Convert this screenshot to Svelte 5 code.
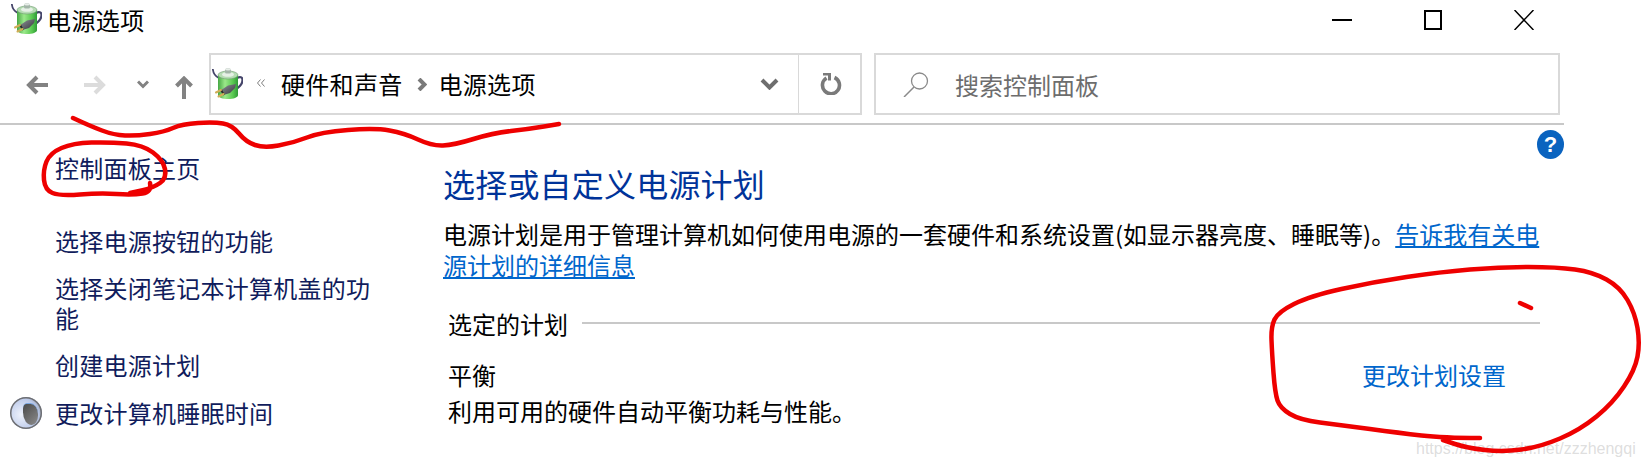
<script>
  const navLinks = [
    { label: "控制面板主页", home: true },
    { label: "选择电源按钮的功能" },
    { label: "选择关闭笔记本计算机盖的功能" },
    { label: "创建电源计划" },
    { label: "更改计算机睡眠时间", sleep: true },
  ];

  // hand-drawn red marks, points read off the screenshot
  const scribbles = [
    [[73,118],[90,126],[114,135],[136,136],[164,132],[182,124],[214,122],[232,125],[246,142],[264,148],[293,143],[321,132],[375,128],[404,133],[432,146],[454,145],[493,133],[529,129],[559,124]],
    [[150,183],[152,192],[133,195],[100,193],[60,196],[45,190],[43,170],[50,153],[73,143],[110,142],[143,145],[163,160],[167,178],[153,188],[130,193]],
    [[1480,438],[1443,438],[1400,433],[1340,425],[1300,420],[1280,408],[1275,393],[1272,353],[1271,327],[1278,312],[1310,296],[1373,282],[1440,272],[1500,267],[1557,267],[1593,272],[1620,287],[1635,313],[1640,343],[1635,370],[1613,403],[1580,430],[1540,447],[1503,452],[1467,448],[1443,440]],
    [[1520,303],[1531,308]],
  ];

  function smooth(pts) {
    let d = `M${pts[0][0]} ${pts[0][1]}`;
    for (let i = 1; i < pts.length - 1; i++) {
      const mx = (pts[i][0] + pts[i + 1][0]) / 2;
      const my = (pts[i][1] + pts[i + 1][1]) / 2;
      d += ` Q${pts[i][0]} ${pts[i][1]} ${mx} ${my}`;
    }
    const last = pts[pts.length - 1];
    return d + ` L${last[0]} ${last[1]}`;
  }
</script>

{#snippet powerIcon()}
  <svg class="power" viewBox="0 0 31 32" width="31" height="32" aria-hidden="true">
    <defs>
      <linearGradient id="cell" x1="0" x2="1" y1="0" y2="0">
        <stop offset="0" stop-color="#46a844" />
        <stop offset="0.35" stop-color="#9be88a" />
        <stop offset="0.75" stop-color="#58c850" />
        <stop offset="1" stop-color="#2f9a38" />
      </linearGradient>
      <linearGradient id="plug" x1="0" x2="1" y1="0" y2="1">
        <stop offset="0" stop-color="#8d9098" />
        <stop offset="1" stop-color="#34353a" />
      </linearGradient>
    </defs>
    <path d="M.8 1c.4 4 2 7 6 9" fill="none" stroke="#45456a" stroke-width="1.800" />
    <path d="M25 10c3-1.500 5.500-1 5.500 2 0 4-3 7-6.500 9" fill="none" stroke="#45456a" stroke-width="2.200" />
    <path d="M6 7v20c0 2.500 4.500 4 10 4s10-1.500 10-4V7z" fill="url(#cell)" />
    <ellipse cx="16" cy="7" rx="10" ry="4" fill="#b5dcb3" stroke="#6f9b70" stroke-width=".6" />
    <ellipse cx="16" cy="6.500" rx="6" ry="2.300" fill="#e6f0e6" />
    <rect x="13" y=".5" width="6" height="5" rx="1.500" fill="#a3b5a8" />
    <ellipse cx="16" cy="1.500" rx="3" ry="1.100" fill="#e8eee9" />
    <path d="M24 16l-8 1.500-6 4 3 5 5-1.500 5-5z" fill="url(#plug)" />
    <path d="M10 21.500l3 5-1.500 1L8 22.500z" fill="#2a2b30" />
    <path d="M9 22L4 24.500M11.500 26l-5 2.500" stroke="#d0ad57" stroke-width="2" stroke-linecap="round" />
  </svg>
{/snippet}

<div class="window">
  <header class="titlebar">
    {@render powerIcon()}
    <span class="title">电源选项</span>
    <div class="controls">
      <svg width="20" height="20" viewBox="0 0 20 20"><path d="M0 10h20" stroke="#000" stroke-width="2" /></svg>
      <svg width="18" height="20" viewBox="0 0 18 20"><rect x="1" y="1" width="16" height="18" fill="none" stroke="#000" stroke-width="2" /></svg>
      <svg width="20" height="20" viewBox="0 0 20 20"><path d="M.5 0l19 20M19.500 0L.5 20" stroke="#000" stroke-width="1.500" /></svg>
    </div>
  </header>

  <div class="toolbar">
    <div class="nav-btns">
      <svg class="back" width="22" height="20" viewBox="0 0 22 20"><path d="M11 2l-8 8 8 8M3 10h19" fill="none" stroke="#828282" stroke-width="4" /></svg>
      <svg class="forward" width="22" height="20" viewBox="0 0 22 20"><path d="M11 2l8 8-8 8M19 10H0" fill="none" stroke="#dcdcdc" stroke-width="4" /></svg>
      <svg class="recent" width="12" height="9" viewBox="0 0 12 9"><path d="M1 1.500l5 5 5-5" fill="none" stroke="#828282" stroke-width="3" /></svg>
      <svg class="up" width="18" height="23" viewBox="0 0 18 23"><path d="M1.500 10L9 2.500 16.500 10M9 3v20" fill="none" stroke="#828282" stroke-width="4" /></svg>
    </div>

    <div class="address">
      {@render powerIcon()}
      <svg class="more" width="8" height="8" viewBox="0 0 8 8"><path d="M3.500 .5L.5 4l3 3.500M7.500 .5L4.500 4l3 3.500" fill="none" stroke="#7d7d7d" /></svg>
      <span class="crumb first">硬件和声音</span>
      <svg class="sep" width="10" height="13" viewBox="0 0 10 13"><path d="M2 1l5.500 5.500L2 12" fill="none" stroke="#7a7a7a" stroke-width="4" /></svg>
      <span class="crumb">电源选项</span>
      <svg class="drop" width="19" height="12" viewBox="0 0 19 12"><path d="M2 2l7.500 7.500L17 2" fill="none" stroke="#6e6e6e" stroke-width="4" /></svg>
      <div class="refresh">
        <svg width="22" height="22" viewBox="0 0 22 22"><path d="M6.500 5a8.500 8.500 0 1 0 8 -.5" fill="none" stroke="#7a7a7a" stroke-width="3.600" /><path d="M3 1h6.500v6.500" fill="none" stroke="#7a7a7a" stroke-width="3" /></svg>
      </div>
    </div>

    <div class="search">
      <svg width="26" height="25" viewBox="0 0 26 25"><circle cx="16.500" cy="9" r="8" fill="none" stroke="#8a8a8a" stroke-width="1.300" /><path d="M11 15L1 25" stroke="#8a8a8a" stroke-width="1.500" /></svg>
      <span>搜索控制面板</span>
    </div>
  </div>

  <div class="body">
    <nav class="side">
      {#each navLinks as link}
        <div class="side-link" class:home={link.home}>
          {#if link.sleep}
            <span class="moon"><span class="moon-shade"></span></span>
          {/if}
          <span>{link.label}</span>
        </div>
      {/each}
    </nav>

    <main class="content">
      <span class="help">?</span>
      <h1>选择或自定义电源计划</h1>
      <p class="desc">
        电源计划是用于管理计算机如何使用电源的一套硬件和系统设置(如显示器亮度、睡眠等)。<a href="#help">告诉我有关电源计划的详细信息</a>
      </p>
      <div class="section">
        <span>选定的计划</span>
        <div class="rule"></div>
      </div>
      <div class="plan">
        <div>
          <div>平衡</div>
          <div>利用可用的硬件自动平衡功耗与性能。</div>
        </div>
        <a class="change" href="#change">更改计划设置</a>
      </div>
    </main>
  </div>

  <span class="watermark">https://blog.csdn.net/zzzhengqi</span>

  <svg class="ink" width="1642" height="467" viewBox="0 0 1642 467" aria-hidden="true">
    {#each scribbles as pts}
      <path d={smooth(pts)} />
    {/each}
  </svg>
</div>

<style>
  :global(body) {
    margin: 0;
    background: #fff;
  }

  .window {
    position: relative;
    width: 1642px;
    height: 467px;
    overflow: hidden;
    background: #fff;
    color: #000;
    font-family: "Noto Sans CJK SC", "Liberation Sans", sans-serif;
    font-size: 24px;
  }

  .titlebar {
    height: 40px;
    display: flex;
    align-items: center;
    padding-left: 11px;
    box-sizing: border-box;
  }

  .titlebar .power {
    margin-top: -2px;
  }

  .title {
    margin-left: 5px;
    line-height: 40px;
    letter-spacing: 0.4px;
  }

  .controls {
    margin-left: auto;
    margin-right: 108px;
    display: flex;
    align-items: center;
    gap: 72px;
    margin-top: -1px;
  }

  .controls svg {
    display: block;
  }

  .toolbar {
    width: 1564px;
    height: 85px;
    padding-top: 13px;
    box-sizing: border-box;
    border-bottom: 2px solid #c8c8c8;
    display: flex;
    align-items: flex-start;
  }

  .nav-btns {
    width: 209px;
    height: 62px;
    padding-left: 26px;
    box-sizing: border-box;
    display: flex;
    align-items: center;
  }

  .nav-btns svg {
    flex: none;
  }

  .back { margin-top: 2px; }
  .forward { margin-left: 36px; margin-top: 2px; }
  .recent { margin-left: 31px; }
  .up { margin-left: 26px; margin-top: 6px; }

  .address {
    width: 653px;
    height: 62px;
    box-sizing: border-box;
    border: 2px solid #d9d9d9;
    display: flex;
    align-items: center;
    padding-left: 1px;
  }

  .address .power { flex: none; }

  .more {
    margin-left: 14px;
    margin-top: -2px;
  }

  .crumb.first { margin-left: 16px; }
  .crumb { line-height: 30px; letter-spacing: 0.3px; }

  .sep { margin: 0 12px 0 14px; flex: none; }

  .drop {
    margin-left: auto;
    margin-right: 19px;
    flex: none;
  }

  .refresh {
    width: 62px;
    height: 100%;
    padding-left: 3px;
    border-left: 1px solid #d9d9d9;
    display: flex;
    align-items: center;
    justify-content: center;
    box-sizing: border-box;
  }

  .search {
    margin-left: 12px;
    width: 686px;
    height: 62px;
    box-sizing: border-box;
    border: 2px solid #d9d9d9;
    display: flex;
    align-items: center;
    padding-left: 27px;
    color: #6d6d6d;
    gap: 26px;
  }

  .body {
    display: flex;
  }

  .side {
    width: 443px;
    padding: 28px 0 0 10px;
    box-sizing: border-box;
    display: flex;
    flex-direction: column;
    gap: 17px;
    color: #101c5c;
    line-height: 30px;
    letter-spacing: 0.25px;
  }

  .side-link {
    display: flex;
    align-items: center;
    width: 368px;
    padding-left: 45px;
    box-sizing: border-box;
  }

  .side-link.home {
    margin-bottom: 26px;
  }

  .moon {
    flex: none;
    width: 32px;
    height: 32px;
    margin-left: -45px;
    margin-right: 13px;
    border-radius: 50%;
    background: radial-gradient(circle at 35% 55%, #eef2fc 0, #bccaea 60%, #777a80 100%);
    box-shadow: inset 0 0 0 1.500px #6e6f72;
    position: relative;
  }

  .moon-shade {
    position: absolute;
    left: 13px;
    top: 6px;
    width: 15px;
    height: 21px;
    background: linear-gradient(135deg, #4a4a4a, #8c8c8c);
    border-radius: 30% 60% 50% 70%;
    border-top: 1px solid #7aa6e0;
  }

  .content {
    position: relative;
    width: 1097px;
    padding-top: 36px;
  }

  .help {
    position: absolute;
    left: 1094px;
    top: 5px;
    width: 27px;
    height: 29px;
    border-radius: 50%;
    background: #0a63bf;
    color: #fff;
    font: bold 22px/29px "Liberation Sans", sans-serif;
    text-align: center;
  }

  h1 {
    margin: 0;
    font-size: 32px;
    font-weight: 400;
    line-height: 44px;
    letter-spacing: 0.2px;
    color: #003399;
  }

  .desc {
    margin: 13px -4px 0 0;
    line-height: 31px;
  }

  a {
    color: #0066cc;
  }

  .section {
    margin-top: 29px;
    padding-left: 5px;
    display: flex;
    align-items: center;
    line-height: 30px;
  }

  .rule {
    flex: 1;
    height: 2px;
    margin-left: 14px;
    margin-top: -3px;
    background: #c8c8c8;
  }

  .plan {
    margin-top: 18px;
    padding-left: 5px;
    display: flex;
    justify-content: space-between;
    align-items: flex-start;
    line-height: 36px;
  }

  .change {
    text-decoration: none;
    margin-right: 34px;
  }

  .watermark {
    position: absolute;
    left: 1416px;
    top: 440px;
    font: 16px/18px "Liberation Sans", sans-serif;
    color: rgba(170, 170, 170, 0.4);
  }

  .ink {
    position: absolute;
    left: 0;
    top: 0;
    pointer-events: none;
  }

  .ink path {
    fill: none;
    stroke: #ee0000;
    stroke-width: 4.5;
    stroke-linecap: round;
    stroke-linejoin: round;
  }
</style>
